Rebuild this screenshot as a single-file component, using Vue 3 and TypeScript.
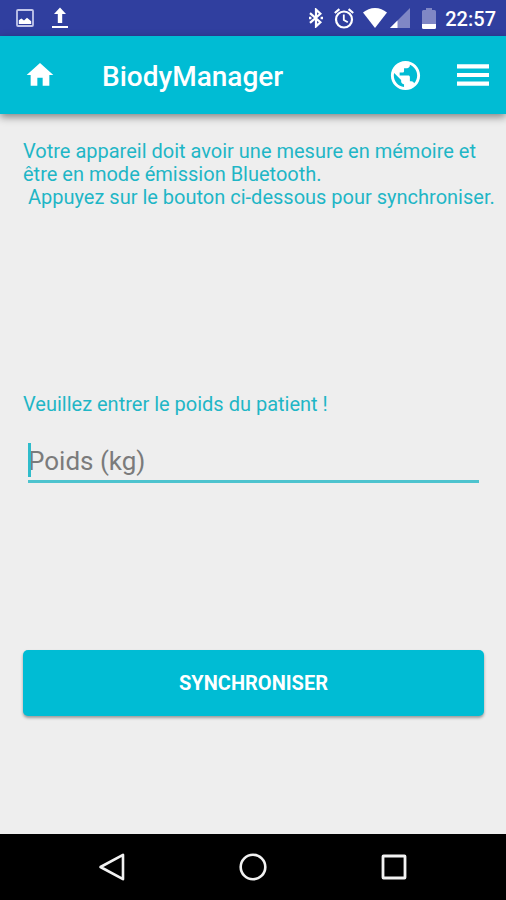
<script setup lang="ts">
import { ref } from 'vue'

const weight = ref<string>('')
const time = '22:57'
const intro =
  'Votre appareil doit avoir une mesure en mémoire et être en mode émission Bluetooth.\n Appuyez sur le bouton ci-dessous pour synchroniser.'
</script>

<template>
  <div class="screen">
    <div class="status">
      <div class="status-left">
        <svg width="18" height="18" viewBox="0 0 18 18" aria-hidden="true">
          <rect x="1" y="1" width="16" height="16" rx="1" fill="none" stroke="#c3c7ea" stroke-width="1.8" />
          <path d="M2.800 15V11.200l2.600-1.800 2.600 2 3-2.600 4.200 3.400V15z" fill="#fff" />
        </svg>
        <svg width="16" height="22" viewBox="0 0 16 22" aria-hidden="true">
          <path d="M8 0.5L14 7h-3.8v9H5.8V7H2zM0 19h16v2H0z" fill="#fff" />
        </svg>
      </div>
      <div class="status-right">
        <svg class="bluetooth" width="14" height="20" viewBox="0 0 14 20" aria-hidden="true">
          <path d="M1 5.2l10.4 9L7 18.4V1.6l4.4 4.2L1 14.8" fill="none" stroke="#fff" stroke-width="2.2" />
          <path d="M0 8.8h2.4v2.4H0zM11.6 8.8H14v2.4h-2.4z" fill="#fff" />
        </svg>
        <svg class="alarm" width="20" height="21" viewBox="0 0 20 21" aria-hidden="true">
          <g fill="none" stroke="#fff" stroke-width="2.2">
            <circle cx="10" cy="11.5" r="8" />
            <path d="M9.8 6.5v5.4l4 2.4" stroke-width="1.8" />
            <path d="M0.8 5L5.4 1.2M19.2 5l-4.6-3.8" />
          </g>
        </svg>
        <svg class="wifi" width="24" height="20" viewBox="0 0 24 20" aria-hidden="true">
          <path d="M12 20L0 4.6C3.4 1.7 7.400 0 12 0s8.600 1.700 12 4.600z" fill="#fff" />
        </svg>
        <svg class="signal" width="20" height="20" viewBox="0 0 20 20" aria-hidden="true">
          <path d="M20 0v20H0z" fill="#8087c5" />
          <path d="M7.500 12.500V20H0z" fill="#fff" />
        </svg>
        <svg class="battery" width="14" height="21" viewBox="0 0 14 21" aria-hidden="true">
          <path d="M4 0h6v2h2.500q1.500 0 1.500 1.500V16H0V3.500Q0 2 1.500 2H4z" fill="#8087c5" />
          <path d="M0 16h14v3.500q0 1.500-1.500 1.500h-11Q0 21 0 19.500z" fill="#fff" />
        </svg>
        <span class="time">{{ time }}</span>
      </div>
    </div>

    <header class="bar">
      <button class="icon-btn" type="button" aria-label="Accueil">
        <svg width="32" height="32" viewBox="0 0 24 24" aria-hidden="true">
          <path d="M10 20v-6h4v6h5v-8h3L12 3 2 12h3v8z" fill="#fff" />
        </svg>
      </button>
      <h1 class="title">BiodyManager</h1>
      <button class="icon-btn" type="button" aria-label="Langue">
        <svg width="35" height="35" viewBox="0 0 24 24" aria-hidden="true">
          <path
            d="M12 2C6.480 2 2 6.480 2 12s4.480 10 10 10 10-4.480 10-10S17.520 2 12 2zm-1 17.930c-3.950-.49-7-3.850-7-7.930 0-.62.080-1.210.21-1.790L9 15v1c0 1.100.9 2 2 2v1.930zm6.900-2.540c-.26-.81-1-1.390-1.900-1.390h-1v-3c0-.55-.45-1-1-1H8v-2h2c.55 0 1-.45 1-1V7h2c1.100 0 2-.9 2-2v-.41c2.930 1.190 5 4.060 5 7.410 0 2.080-.8 3.970-2.100 5.390z"
            fill="#fff"
          />
        </svg>
      </button>
      <button class="icon-btn menu" type="button" aria-label="Menu">
        <svg width="32" height="22" viewBox="0 0 32 22" aria-hidden="true">
          <path d="M0 0.300h32v4.200H0zM0 8.900h32v4.200H0zM0 17.500h32v4.200H0z" fill="#fff" />
        </svg>
      </button>
    </header>

    <main class="content">
      <p class="intro">{{ intro }}</p>
      <form class="form" @submit.prevent>
        <label class="label" for="weight">Veuillez entrer le poids du patient !</label>
        <div class="field">
          <input id="weight" v-model="weight" class="input" type="text" inputmode="decimal" placeholder="Poids (kg)" />
          <span class="caret" aria-hidden="true"></span>
        </div>
        <button class="submit" type="submit">SYNCHRONISER</button>
      </form>
    </main>

    <nav class="nav" aria-label="Navigation">
      <button class="icon-btn" type="button" aria-label="Retour">
        <svg width="28" height="28" viewBox="0 0 28 28" aria-hidden="true">
          <path d="M2.500 14L25 1.800v24.400z" fill="none" stroke="#f2f2f2" stroke-width="2.600" stroke-linejoin="round" />
        </svg>
      </button>
      <button class="icon-btn" type="button" aria-label="Écran d'accueil">
        <svg width="28" height="28" viewBox="0 0 28 28" aria-hidden="true">
          <circle cx="14" cy="14" r="12.300" fill="none" stroke="#f2f2f2" stroke-width="2.600" />
        </svg>
      </button>
      <button class="icon-btn" type="button" aria-label="Applications récentes">
        <svg width="28" height="28" viewBox="0 0 28 28" aria-hidden="true">
          <rect x="3" y="3" width="22" height="22" rx="0.500" fill="none" stroke="#f2f2f2" stroke-width="2.800" />
        </svg>
      </button>
    </nav>
  </div>
</template>

<style>
body {
  margin: 0;
}
</style>

<style scoped>
.screen {
  display: flex;
  flex-direction: column;
  min-height: 100vh;
  background: #eeeeee;
  font-family: Roboto, "Liberation Sans", sans-serif;
}

.status {
  display: flex;
  align-items: center;
  justify-content: space-between;
  height: 36px;
  padding: 0 10px 0 16px;
  background: #303f9f;
  color: #fff;
}

.status-left {
  display: flex;
  align-items: center;
  gap: 18px;
}

.status-right {
  display: flex;
  align-items: center;
}

.bluetooth {
  margin-right: 11px;
}

.alarm {
  margin-right: 9px;
}

.wifi {
  margin-right: 3px;
}

.signal {
  margin-right: 12px;
}

.battery {
  margin-right: 9px;
}

.time {
  padding-top: 2px;
  font-size: 20px;
  font-weight: 500;
  line-height: 24px;
}

.bar {
  display: flex;
  align-items: center;
  height: 78px;
  padding: 0 17px 0 24px;
  background: #00bcd4;
  box-shadow: 0 3px 8px rgba(0, 0, 0, 0.45);
}

.icon-btn {
  display: flex;
  padding: 0;
  border: 0;
  background: none;
  cursor: pointer;
}

.title {
  flex: 1;
  margin: 0 0 0 46px;
  padding-top: 4px;
  color: #fff;
  font-size: 28px;
  font-weight: 500;
  line-height: 36px;
}

.menu {
  margin-left: 34px;
}

.content {
  display: flex;
  flex: 1;
  flex-direction: column;
  padding: 26px 0 26px 23px;
}

.intro {
  margin: 0 4px 0 0;
  color: #1fb6c6;
  font-size: 20px;
  line-height: 23px;
  white-space: pre-wrap;
}

.form {
  display: flex;
  flex-direction: column;
  margin: 184px 22px 0 0;
}

.label {
  color: #1fb6c6;
  font-size: 20px;
  line-height: 23px;
}

.field {
  position: relative;
  margin: 25px 5px 0;
}

.input {
  display: block;
  box-sizing: border-box;
  width: 100%;
  height: 42px;
  padding: 0;
  border: 0;
  border-bottom: 3px solid #4dc3ce;
  border-radius: 0;
  outline: none;
  background: transparent;
  color: #333;
  font-family: inherit;
  font-size: 26px;
}

.input::placeholder {
  color: #7b7b7b;
  opacity: 1;
}

.caret {
  position: absolute;
  top: 2px;
  left: 0;
  width: 3px;
  height: 34px;
  background: #2fbccb;
}

.submit {
  height: 66px;
  margin-top: 167px;
  border: 0;
  border-radius: 5px;
  background: #00bcd4;
  box-shadow: 0 2px 3px rgba(0, 0, 0, 0.35);
  color: #fff;
  font-family: inherit;
  font-size: 20px;
  font-weight: 700;
  cursor: pointer;
}

.nav {
  display: flex;
  align-items: center;
  justify-content: space-between;
  height: 66px;
  padding: 0 98px;
  background: #000;
}
</style>
